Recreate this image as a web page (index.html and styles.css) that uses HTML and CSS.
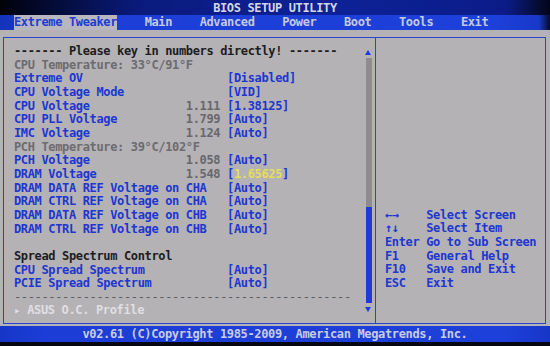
FILE: index.html
```html
<!DOCTYPE html>
<html>
<head>
<meta charset="utf-8">
<link rel="stylesheet" href="styles.css">
</head>
<body>
<div class="screen">
  <div class="title">BIOS SETUP UTILITY</div>
  <div class="menubar">
    <span class="tab sel">Extreme Tweaker</span>
    <span class="tab">Main</span>
    <span class="tab">Advanced</span>
    <span class="tab">Power</span>
    <span class="tab">Boot</span>
    <span class="tab">Tools</span>
    <span class="tab">Exit</span>
  </div>
  <div class="main">
    <div class="box">
      <div class="left">
        <div class="items">
          <div class="line dark">------- Please key in numbers directly! -------</div>
          <div class="line grey">CPU Temperature: 33°C/91°F</div>
          <div class="row"><span>Extreme OV</span><span></span><span>[Disabled]</span></div>
          <div class="row"><span>CPU Voltage Mode</span><span></span><span>[VID]</span></div>
          <div class="row"><span>CPU Voltage</span><span class="num">1.111</span><span>[1.38125]</span></div>
          <div class="row"><span>CPU PLL Voltage</span><span class="num">1.799</span><span>[Auto]</span></div>
          <div class="row"><span>IMC Voltage</span><span class="num">1.124</span><span>[Auto]</span></div>
          <div class="line grey">PCH Temperature: 39°C/102°F</div>
          <div class="row"><span>PCH Voltage</span><span class="num">1.058</span><span>[Auto]</span></div>
          <div class="row"><span>DRAM Voltage</span><span class="num">1.548</span><span>[<span class="hl">1.65625</span>]</span></div>
          <div class="row"><span>DRAM DATA REF Voltage on CHA</span><span></span><span>[Auto]</span></div>
          <div class="row"><span>DRAM CTRL REF Voltage on CHA</span><span></span><span>[Auto]</span></div>
          <div class="row"><span>DRAM DATA REF Voltage on CHB</span><span></span><span>[Auto]</span></div>
          <div class="row"><span>DRAM CTRL REF Voltage on CHB</span><span></span><span>[Auto]</span></div>
          <div class="line">&nbsp;</div>
          <div class="line dark">Spread Spectrum Control</div>
          <div class="row"><span>CPU Spread Spectrum</span><span></span><span>[Auto]</span></div>
          <div class="row"><span>PCIE Spread Spectrum</span><span></span><span>[Auto]</span></div>
          <div class="line dash">-------------------------------------------------</div>
          <div class="line off"><span class="tri">▸</span> ASUS O.C. Profile</div>
        </div>
        <div class="scroll">
          <div class="arrow up"></div>
          <div class="track"></div>
          <div class="thumb"></div>
          <div class="arrow down"></div>
        </div>
      </div>
      <div class="right">
        <div class="help">
          <div class="hrow"><span>←→</span><span>Select Screen</span></div>
          <div class="hrow"><span>↑↓</span><span>Select Item</span></div>
          <div class="hrow"><span>Enter</span><span>Go to Sub Screen</span></div>
          <div class="hrow"><span>F1</span><span>General Help</span></div>
          <div class="hrow"><span>F10</span><span>Save and Exit</span></div>
          <div class="hrow"><span>ESC</span><span>Exit</span></div>
        </div>
      </div>
    </div>
  </div>
  <div class="footer">v02.61 (C)Copyright 1985-2009, American Megatrends, Inc.</div>
  <div class="bottom"></div>
</div>
</body>
</html>
```
FILE: styles.css
```css
html, body {
  margin: 0;
  padding: 0;
  background: #05060f;
}
.screen {
  width: 550px;
  height: 346px;
  overflow: hidden;
  display: flex;
  flex-direction: column;
  font-family: "DejaVu Sans Mono", "Liberation Mono", monospace;
  font-weight: bold;
  font-size: 12px;
  letter-spacing: -0.35px;
}
.title, .tab, .line, .row span, .hrow span, .footer {
  white-space: pre;
}
.title {
  height: 15px;
  flex: none;
  line-height: 16px;
  text-align: center;
  color: #d4d6e6;
  background: linear-gradient(to right, #010208 0%, #040a30 8%, #0a1a7c 25%, #0d2298 60%, #0b1c88 92%, #030616 100%);
}
.menubar {
  height: 15px;
  flex: none;
  line-height: 15px;
  display: flex;
  gap: 27.5px;
  padding-left: 14px;
  background: linear-gradient(to right, #1432bc 0%, #1c3ed6 10%, #1d40da 90%, #1838c8 98%, #060a26 100%);
  color: #c6cae2;
}
.tab.sel {
  background: #b8b6be;
  color: #1f3bd2;
}
.main {
  height: 296px;
  flex: none;
  box-sizing: border-box;
  padding: 7px 4px 0 3px;
  background: #b4b2b5;
}
.box {
  height: 287px;
  box-sizing: border-box;
  border: 1px solid #2a44d0;
  display: flex;
}
.left {
  width: 371px;
  display: flex;
}
.items {
  width: 351px;
  padding: 7px 0 0 10px;
  line-height: 13.65px;
  color: #2036d0;
}
.line.dark {
  color: #1c1c22;
}
.line.grey {
  color: #6c6b70;
}
.line.dash {
  color: #5a5a60;
  font-weight: normal;
}
.line.off {
  color: #e0dfe4;
}
.tri {
  font-size: 11px;
}
.row {
  display: grid;
  grid-template-columns: 171.85px 41.24px auto;
}
.num {
  color: #68676c;
}
.hl {
  color: #e6de5a;
}
.scroll {
  width: 7px;
  display: flex;
  flex-direction: column;
  padding-top: 12px;
}
.arrow {
  width: 0;
  height: 0;
  border-left: 3.5px solid transparent;
  border-right: 3.5px solid transparent;
}
.arrow.up {
  border-bottom: 5px solid #1f3ad6;
  margin-bottom: 3px;
}
.arrow.down {
  border-top: 5px solid #1f3ad6;
  margin-top: 4px;
}
.track {
  height: 149px;
  background: #8e8c90;
  margin: 0 0.5px;
}
.thumb {
  height: 96px;
  background: #1e3bd8;
  margin: 0 0.5px;
}
.right {
  flex: 1;
  border-left: 1px solid #2a44d0;
  padding: 7px 0 0 9px;
}
.help {
  margin-top: 163.8px;
  line-height: 13.65px;
  color: #2036d0;
}
.hrow {
  display: grid;
  grid-template-columns: 41.24px auto;
}
.footer {
  height: 16px;
  flex: none;
  line-height: 16px;
  text-align: center;
  color: #c8cce4;
  background: linear-gradient(to right, #1636c6 0%, #1c3ed6 8%, #1d40da 92%, #1636c6 100%);
}
.bottom {
  height: 4px;
  flex: none;
  background: #05060f;
}
```
